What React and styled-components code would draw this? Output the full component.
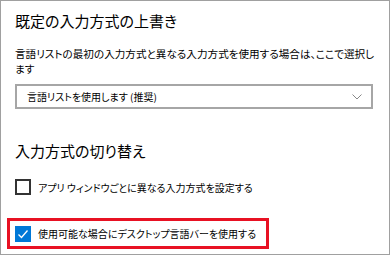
import styled, { createGlobalStyle } from 'styled-components';

const Global = createGlobalStyle`
  html, body { margin: 0; padding: 0; background: #fff; }
  * { box-sizing: border-box; }
`

const Frame = styled.div`
  width: 390px;
  height: 255px;
  border: 1px solid #a0a0a0;
  padding: 0 0 0 14px;
  font-family: "Noto Sans CJK JP", "Noto Sans", sans-serif;
  color: #000;
  overflow: hidden;
`
const Heading = styled.h2`
  margin: ${p => p.$top}px 0 0;
  font-size: 15px;
  font-weight: 400;
  line-height: 20px;
  font-feature-settings: "palt";
`
const Description = styled.p`
  margin: 15px 0 0;
  width: 362px;
  font-size: 10.6px;
  line-height: 15px;
  font-feature-settings: "palt";
`
const Dropdown = styled.div`
  margin-top: 8px;
  width: 358px;
  height: 25px;
  border: 2px solid #a6a6a6;
  display: flex;
  align-items: center;
  justify-content: space-between;
  padding: 0 9px 0 10px;
  font-size: 10px;
  font-feature-settings: "palt";
`
const Option = styled.label`
  display: flex;
  align-items: center;
  gap: 7px;
  font-size: 10px;
  font-feature-settings: "palt";
  height: 16px;
`
const Box = styled.span`
  width: 16px;
  height: 16px;
  border: 2px solid ${p => (p.$checked ? '#0078d7' : '#333')};
  background: ${p => (p.$checked ? '#0078d7' : '#fff')};
  display: flex;
  align-items: center;
  justify-content: center;
`
const Highlight = styled.div`
  margin: 23px 0 0 -8px;
  width: 262px;
  height: 31px;
  border: 3px solid #e81123;
  display: flex;
  align-items: center;
  padding-left: 5px;
`
const FirstOption = styled.div`
  margin-top: 18px;
`

const Checkbox = ({ checked, children }) => (
  <Option>
    <Box $checked={checked}>
      {checked && (
        <svg width="12" height="12" viewBox="0 0 12 12">
          <path d="M1.5 6.5 L4.5 9.5 L10.5 2.5" fill="none" stroke="#fff" strokeWidth="1.3" />
        </svg>
      )}
    </Box>
    <span>{children}</span>
  </Option>
)

const App = () => (
  <Frame>
    <Global />
    <Heading $top={10}>既定の入力方式の上書き</Heading>
    <Description>言語リストの最初の入力方式と異なる入力方式を使用する場合は、ここで選択します</Description>
    <Dropdown>
      <span>言語リストを使用します (推奨)</span>
      <svg width="10" height="6" viewBox="0 0 10 6">
        <path d="M0.5 0.5 L5 5 L9.5 0.5" fill="none" stroke="#888" strokeWidth="1" />
      </svg>
    </Dropdown>
    <Heading $top={32}>入力方式の切り替え</Heading>
    <FirstOption>
      <Checkbox>アプリ ウィンドウごとに異なる入力方式を設定する</Checkbox>
    </FirstOption>
    <Highlight>
      <Checkbox checked>使用可能な場合にデスクトップ言語バーを使用する</Checkbox>
    </Highlight>
  </Frame>
)

export default App
